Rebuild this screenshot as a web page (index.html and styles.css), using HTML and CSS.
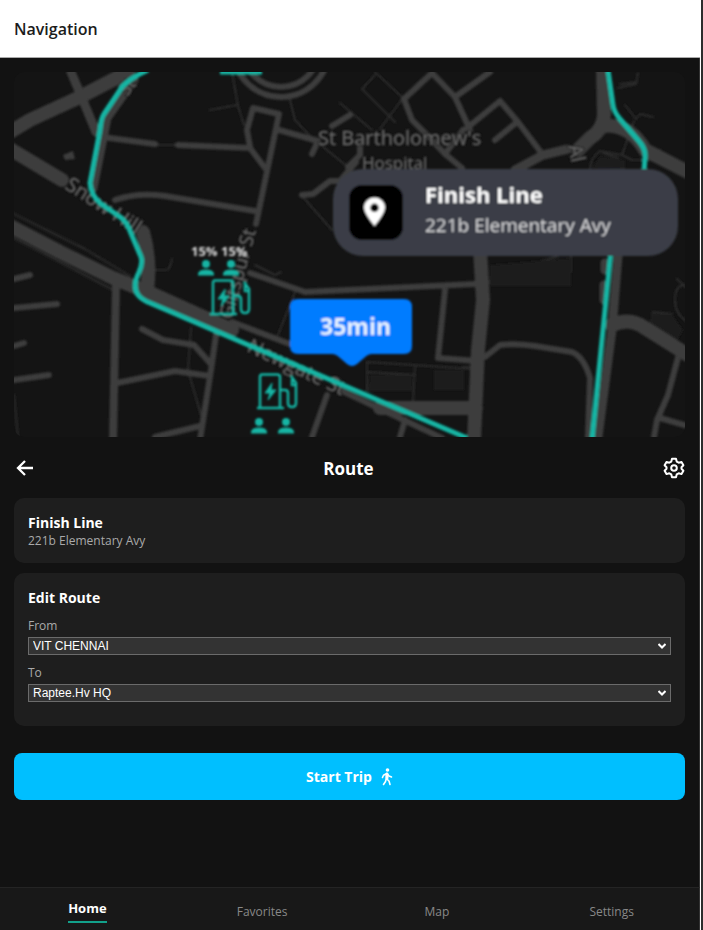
FILE: index.html
```html
<!DOCTYPE html>
<html lang="en">
<head>
<meta charset="utf-8">
<meta name="viewport" content="width=device-width, initial-scale=1">
<title>Navigation</title>
<link rel="stylesheet" href="styles.css">
</head>
<body>
<div class="app">
  <header class="topbar"><h1 class="topbar-title">Navigation</h1></header>
  <main class="content">
    <svg class="map" viewBox="14 72 671 365" preserveAspectRatio="xMidYMid slice" role="img" aria-label="Route map">
      <defs>
        <filter id="soft" filterUnits="userSpaceOnUse" x="0" y="60" width="700" height="390"><feGaussianBlur stdDeviation="1"/></filter>
        <g id="person"><circle cx="0" cy="-4" r="4"/><path d="M-8 7.500V5.500Q-7 1.500 0 1.500T8 5.500V7.500Z"/></g>
        <g id="charger" fill="none" stroke="#12b5a4" stroke-width="2.500">
          <path d="M3 35V4Q3 1.500 5 1.500H20Q23 1.500 23 4V35M0 35H27M23 17H28Q31 17 31 20V30Q31 34 35 34T39 30V10L34 3M35 6V12H39"/>
          <path d="M15 10L8 20H13L11 27L19 17H14Z" fill="#12b5a4" stroke-width="1"/>
        </g>
      </defs>
      <rect x="14" y="72" width="671" height="365" fill="#141414"/>
      <g filter="url(#soft)">
        <g class="road lane">
          <path d="M10 212L85 249L130 276M10 236L60 262L115 291M155 145H178M155 270H166Q170 270 172 259M191 328L188 370L201 415M14 395L18 437"/>
          <path d="M232 72L238 106L244 125M210 110L237 105M290 100L295 120L312 138L348 167M302 196L332 230M295 292L278 335"/>
          <path d="M340 103L372 130M375 75L362 89L395 122M375 72L403 98L380 129"/>
          <path d="M367 390V362L475 369M368 372L415 375M415 366L413 402M463 367H475M255 265L275 275L281 272"/>
          <path d="M618 88L636 84L638 73M620 84L637 82M625 105L636 119L640 114L653 117M634 121L622 155L600 151Q590 158 590 170M603 153L618 158M622 155L632 160H655M648 155L660 150"/>
          <path d="M488 284Q498 267 513 267T535 271Q529 284 513 284T494 282M540 262L558 256M571 257V271Q570 279 560 280L549 278M650 332L653 312L672 314M688 322Q675 315 675 300T685 285M677 279L687 288"/>
          <circle cx="542" cy="272" r="8"/>
        </g>
        <g fill="#1c1c1c"><path d="M370 375H412V391H368ZM434 370H464V390H434ZM490 265L571 258V286H490ZM652 314H672L683 330L675 345L650 332ZM592 168L600 156L625 160V169Z"/></g>
        <g class="road street">
          <path d="M102 137L155 144M178 145L250 148L265 168M115 200Q137 192 165 196L255 211"/>
          <path d="M14 279L30 275M14 308L57 304M14 346L24 343M14 380L49 375M117 383L175 371L210 376M142 329L163 340L194 345L210 363M155 437L200 426M216 335L211 370L200 440"/>
          <path d="M256 224L279 114L253 108L247 130L250 147M279 130L318 141L312 154M348 167L360 155V145M302 195L313 194L330 181H340L356 162M332 126L350 115"/>
          <path d="M404 99L432 73L455 97L470 130M404 99L412 120L428 136L445 154L462 168M455 97L490 72M467 128L500 101L518 122L543 155M495 140L517 122M445 154L463 130"/>
          <path d="M250 273L305 292L475 284M445 290L438 358L478 361M232 322L295 346M327 395L312 437M405 420L400 437M340 390L442 438"/>
          <path d="M485 357L500 345Q515 343 535 346L572 352Q584 357 590 378L588 437M680 350L668 395L657 420L654 437M660 418L688 426"/>
          <circle cx="281" cy="49" r="48"/><circle cx="281" cy="49" r="38"/>
        </g>
        <g class="road vertical"><path d="M116 285L113 440"/></g>
        <g class="road avenue">
          <path d="M10 132L30 120L80 97L128 72M10 149L62 180M10 226L60 252L113 278L150 293L232 330M143 232Q151 260 147 290M380 408H476M480 250L483 300L478 350L474 440"/>
          <path d="M603 70L604 115Q603 130 590 138L578 150M604 126Q630 124 645 150L688 172M612 325Q630 317 645 328L688 355"/>
        </g>
        <g class="road shade">
          <path d="M71 72L82 98L96 132M134 80L107 118L93 188M618 256L612 330L598 437M515 170L543 155L568 149M605 270V263M604 285V300"/>
        </g>
        <path d="M63 155L73 151L75 159L65 160Z" fill="#3c3c3c"/>
        <g class="map-label">
          <text x="318" y="145" font-size="20">St Bartholomew's</text>
          <text x="362" y="169" font-size="17">Hospital</text>
          <text transform="translate(64 188) rotate(33)" font-size="20">Snow Hill</text>
          <text transform="translate(246 351) rotate(25)" font-size="20">Newgate St</text>
          <text transform="translate(232 320) rotate(-75)" font-size="19">Giltspur St</text>
          <text transform="translate(568 146) rotate(78)" font-size="20">Al</text>
          <text transform="translate(127 97) rotate(-52)" font-size="18">St</text>
        </g>
        <g class="route">
          <path d="M148 70Q130 78 122 87L104 114Q101 118 100 130L90 183Q91 195 100 203L120 217Q127 222 130 231L141 257Q143 263 139 272Q132 286 138 295Q142 300 150 303L467 438"/>
          <path d="M608 70L613 105Q614 112 620 119L638 140Q646 149 645 157L644 172M611 250L592 440"/>
          <path d="M220 72H262"/>
        </g>
        <g fill="#12b5a4"><use href="#person" x="206" y="268"/><use href="#person" x="231" y="268"/><use href="#person" x="259" y="426"/><use href="#person" x="286" y="426"/></g>
        <use href="#charger" x="210" y="279"/><use href="#charger" x="257" y="373"/>
        <text class="percent" x="191" y="256">15% 15%</text>
        <rect x="333" y="169" width="345" height="87" rx="30" fill="#3a3d46"/>
        <rect x="349" y="185" width="54" height="55" rx="13" fill="#000"/>
        <path d="M374.500 226Q364 213 364 207.500A10.500 10 0 0 1 385 207.500Q385 213 374.500 226ZM374.500 203.500A4.200 4.200 0 1 0 374.500 212A4.200 4.200 0 1 0 374.500 203.500Z" fill="#fff" fill-rule="evenodd"/>
        <text class="callout-title" x="425" y="203">Finish Line</text>
        <text class="callout-text" x="425" y="232">221b Elementary Avy</text>
        <path d="M298 299H404Q412 299 412 307V346Q412 354 404 354H372Q368 354 364 358L357 364Q352 368 347 364L340 358Q336 354 332 354H298Q290 354 290 346V307Q290 299 298 299Z" fill="#007bff"/>
        <text class="eta" x="320" y="335">35min</text>
      </g>
    </svg>

    <div class="route-head">
      <button class="icon-button" type="button" aria-label="Back">
        <svg width="20" height="20" viewBox="0 0 20 20" fill="none" stroke="#fff" stroke-width="2.300"><path d="M19 10H4M11 3L4 10L11 17"/></svg>
      </button>
      <h2 class="route-title">Route</h2>
      <button class="icon-button" type="button" aria-label="Route settings">
        <svg width="22" height="22" viewBox="0 0 22 22" fill="none" stroke="#fff" stroke-width="2" stroke-linejoin="round"><path d="M9 1.800H13L13.700 4.600L15.700 5.700L18.500 4.900L20.400 8.300L18.500 10.300V11.700L20.400 13.700L18.500 17.100L15.700 16.300L13.700 17.400L13 20.200H9L8.300 17.400L6.300 16.300L3.500 17.100L1.600 13.700L3.500 11.700V10.300L1.600 8.300L3.500 4.900L6.300 5.700L8.300 4.600Z"/><circle cx="11" cy="11" r="2.800"/></svg>
      </button>
    </div>

    <section class="card">
      <h3 class="card-title">Finish Line</h3>
      <p class="card-text">221b Elementary Avy</p>
    </section>

    <section class="card edit">
      <h3 class="card-title">Edit Route</h3>
      <div class="field">
        <label class="field-label" for="from">From</label>
        <div class="select-box">
          <select class="field-select" id="from"><option>VIT CHENNAI</option></select>
          <svg class="chevron" width="8" height="6" viewBox="0 0 8 6" aria-hidden="true"><path d="M.500 1L4 4.500L7.500 1"/></svg>
        </div>
      </div>
      <div class="field">
        <label class="field-label" for="to">To</label>
        <div class="select-box">
          <select class="field-select" id="to"><option>Raptee.Hv HQ</option></select>
          <svg class="chevron" width="8" height="6" viewBox="0 0 8 6" aria-hidden="true"><path d="M.500 1L4 4.500L7.500 1"/></svg>
        </div>
      </div>
    </section>

    <button class="start" type="button">Start Trip
      <svg width="12" height="18" viewBox="0 0 12 18" fill="none" stroke="#fff" stroke-width="1.600" stroke-linecap="round" stroke-linejoin="round" aria-hidden="true"><circle cx="6.500" cy="2" r="1.800" fill="#fff" stroke="none"/><path d="M5.800 5.500L5.300 10.500L8 13L9 16.500M5.300 10.500L4.500 13.500L2.500 16.500M5.800 5.500L2.500 7.200L1.500 9.500M6 5.500L8 8L10.500 9"/><path d="M6 6V10" stroke-width="3"/></svg>
    </button>
  </main>
  <nav class="tabs">
    <a class="tab tab-active" href="#home">Home</a>
    <a class="tab" href="#favorites">Favorites</a>
    <a class="tab" href="#map">Map</a>
    <a class="tab" href="#settings">Settings</a>
  </nav>
</div>
</body>
</html>
```
FILE: styles.css
```css
* { box-sizing: border-box; }
h1, h2, h3, p { margin: 0; }
body {
  margin: 0;
  background: #2c2c2c;
  color: #fff;
  font-family: "Segoe UI", "Open Sans", "Noto Sans", sans-serif;
}
.app {
  display: flex;
  flex-direction: column;
  min-height: 100vh;
  margin-right: 2px;
  border-right: 1px solid #fff;
  background: #121212;
}
.topbar {
  padding: 18px 14px 17px;
  border-bottom: 1px solid #aaa;
  background: #fff;
}
.topbar-title {
  color: #1c1c1c;
  font-size: 16px;
  font-weight: 600;
  line-height: 22px;
}
.content {
  display: flex;
  flex: 1;
  flex-direction: column;
  padding: 14px;
  border-right: 1px solid #333;
}
.map {
  display: block;
  width: 100%;
  border-radius: 10px;
}
.road {
  fill: none;
  stroke: #3c3c3c;
  stroke-linecap: round;
  stroke-linejoin: round;
}
.lane { stroke: #2c2c2c; stroke-width: 2px; }
.street { stroke-width: 6px; }
.vertical { stroke-width: 8px; }
.avenue { stroke-width: 14px; }
.shade { stroke-width: 9px; }
.route {
  fill: none;
  stroke: #12b5a4;
  stroke-width: 5px;
}
.map-label {
  fill: #6a6a6a;
  stroke: #141414;
  stroke-width: 2px;
  paint-order: stroke;
}
.percent { fill: #ddd; font-size: 13px; font-weight: 700; }
.callout-title { fill: #fff; font-size: 22px; font-weight: 700; }
.callout-text { fill: #d8d8da; font-size: 19px; }
.eta { fill: #e8f3ff; font-size: 23px; font-weight: 700; }

.route-head {
  display: flex;
  align-items: center;
  justify-content: space-between;
  padding: 18px 0;
}
.icon-button {
  display: flex;
  padding: 0;
  border: 0;
  background: none;
}
.route-title {
  padding-top: 2px;
  font-size: 17px;
  font-weight: 700;
  line-height: 23px;
}
.card {
  margin-bottom: 10px;
  padding: 14px;
  border-radius: 10px;
  background: #1e1e1e;
}
.edit { margin-bottom: 27px; }
.card-title {
  font-size: 14px;
  font-weight: 700;
  line-height: 21px;
}
.card-text, .field-label {
  color: #aaa;
  font-size: 12px;
  line-height: 16px;
}
.field {
  display: flex;
  flex-direction: column;
  gap: 3px;
  margin: 10px 0;
}
.select-box { position: relative; display: flex; }
.field-select {
  width: 100%;
  height: 18px;
  padding: 0 4px;
  appearance: none;
  border: 1px solid #6b6b6b;
  border-radius: 0;
  background: #333;
  color: #fff;
  font: 12px "Liberation Sans", Arial, sans-serif;
}
.chevron {
  position: absolute;
  top: 6px;
  right: 5px;
  fill: none;
  stroke: #fff;
  stroke-width: 2px;
  pointer-events: none;
}
.start {
  display: flex;
  align-items: center;
  justify-content: center;
  gap: 9px;
  padding: 13px;
  border: 0;
  border-radius: 8px;
  background: #00bfff;
  color: #fff;
  font: 700 14px/21px "Segoe UI", "Open Sans", "Noto Sans", sans-serif;
}
.tabs {
  position: sticky;
  bottom: 0;
  display: grid;
  grid-template-columns: repeat(4, 1fr);
  align-items: center;
  justify-items: center;
  padding: 11px 0 7px;
  border-top: 1px solid #242424;
  border-right: 1px solid #333;
  background: #181818;
}
.tab {
  color: #888;
  font-size: 12px;
  line-height: 18px;
  padding-top: 2px;
  text-decoration: none;
}
.tab-active {
  padding: 0 0 4px;
  border-bottom: 2px solid #12a08a;
  color: #fff;
  font-size: 13px;
  font-weight: 700;
}
```
